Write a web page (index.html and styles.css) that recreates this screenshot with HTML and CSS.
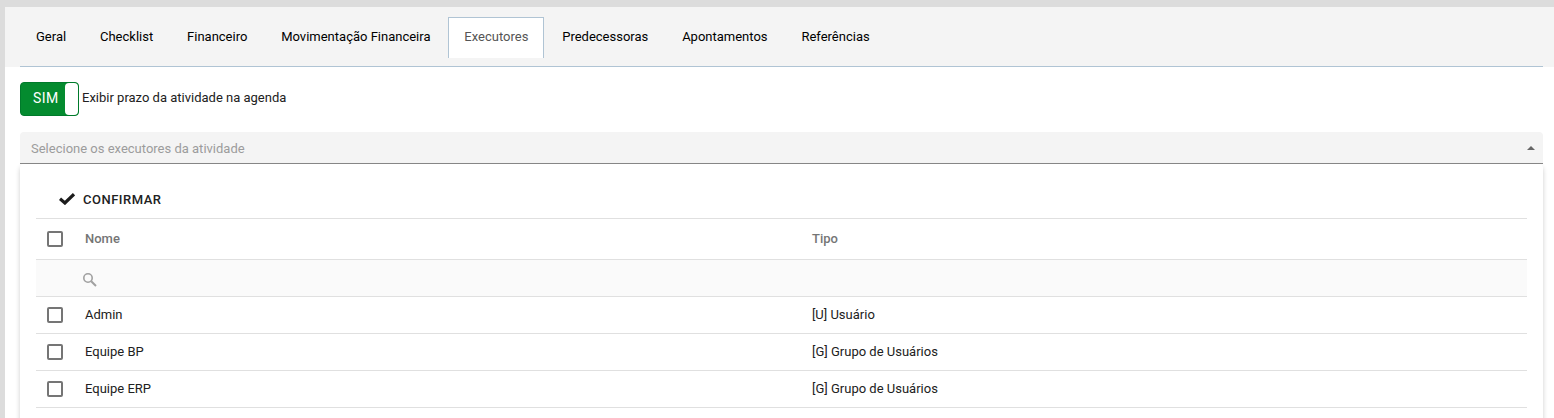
FILE: index.html
```html
<!DOCTYPE html>
<html lang="pt-BR">
<head>
<meta charset="utf-8">
<title>Executores</title>
<link rel="stylesheet" href="styles.css">
</head>
<body>
<main class="page">
  <header class="tabs-bar">
    <nav class="tabs">
      <a class="tab">Geral</a>
      <a class="tab">Checklist</a>
      <a class="tab">Financeiro</a>
      <a class="tab">Movimentação Financeira</a>
      <a class="tab tab-active">Executores</a>
      <a class="tab">Predecessoras</a>
      <a class="tab">Apontamentos</a>
      <a class="tab">Referências</a>
    </nav>
  </header>
  <section class="content">
    <div class="switch-row">
      <div class="switch"><span class="switch-text">SIM</span><span class="switch-handle"></span></div>
      <span class="switch-label">Exibir prazo da atividade na agenda</span>
    </div>
    <div class="select">
      <span>Selecione os executores da atividade</span>
      <svg class="arrow" width="8" height="4" viewBox="0 0 8 4"><path d="M0 4 4 0 8 4z" fill="#666"/></svg>
    </div>
    <div class="panel">
      <div class="toolbar">
        <svg width="16" height="12" viewBox="0 0 16 12"><path d="M1 5.8 5.9 10 15 1.2" fill="none" stroke="#1c1c1c" stroke-width="3.2"/></svg>
        <span>CONFIRMAR</span>
      </div>
      <div class="grid">
        <div class="row row-head"><span class="cell-check"><i class="check"></i></span><span class="cell">Nome</span><span class="cell">Tipo</span></div>
        <div class="row row-filter">
          <svg class="search" width="14" height="14" viewBox="0 0 14 14" fill="none" stroke="#a0a0a0"><circle cx="5" cy="5" r="4.2" stroke-width="1.6"/><path d="M8.2 8.2 13 13" stroke-width="2"/></svg>
        </div>
        <div class="row"><span class="cell-check"><i class="check"></i></span><span class="cell">Admin</span><span class="cell">[U] Usuário</span></div>
        <div class="row"><span class="cell-check"><i class="check"></i></span><span class="cell">Equipe BP</span><span class="cell">[G] Grupo de Usuários</span></div>
        <div class="row"><span class="cell-check"><i class="check"></i></span><span class="cell">Equipe ERP</span><span class="cell">[G] Grupo de Usuários</span></div>
      </div>
    </div>
  </section>
</main>
</body>
</html>
```

FILE: styles.css
```css
* { box-sizing: border-box; }
body {
  margin: 0;
  height: 418px;
  overflow: hidden;
  padding: 7px 0 0 5px;
  background: #dcdcdc;
  font: 13px/20px Roboto, sans-serif;
  color: #212121;
}
.page { height: 411px; background: #fff; overflow: hidden; }
.tabs-bar { height: 60px; padding: 10px 11px 0 15px; background: #f4f4f4; }
.tabs { display: flex; gap: 1.85px; height: 50px; border-bottom: 1px solid #b0c4d4; }
.tab {
  height: 41px;
  padding: 9px 15px 0;
  border: 1px solid transparent;
  border-bottom: 0;
  color: #000;
  white-space: nowrap;
}
.tab-active { background: #fff; border-color: #b0c4d4; color: #555; }
.content { padding: 15px 11px 0 15px; }
.switch-row { display: flex; gap: 3px; height: 34px; }
.switch {
  display: flex;
  width: 59px;
  height: 34px;
  border: 1px solid #007a2b;
  border-radius: 4px;
  background: #048b2f;
  color: #fff;
}
.switch-text { width: 44px; padding-left: 12px; font-size: 14px; line-height: 31px; letter-spacing: .5px; }
.switch-handle { width: 13px; background: #fff; border-radius: 4px; }
.switch-label { line-height: 32px; }
.select {
  display: flex;
  justify-content: space-between;
  height: 32px;
  margin-top: 16px;
  padding: 0 8px 0 11px;
  border-bottom: 1px solid #898989;
  border-radius: 4px 4px 0 0;
  background: #f4f4f4;
  color: #9c9c9c;
  line-height: 33px;
}
.arrow { margin-top: 14px; }
.panel {
  height: 300px;
  padding: 16px 16px 0;
  border-radius: 4px;
  box-shadow: 0 3px 5px rgba(0, 0, 0, .2);
  background: #fff;
}
.toolbar {
  display: flex;
  align-items: center;
  gap: 8px;
  height: 38px;
  padding: 1px 0 0 23px;
  font-weight: 500;
  letter-spacing: .5px;
}
.toolbar svg { margin-bottom: 1px; }
.toolbar span { padding-top: 1px; }
.grid { border-top: 1px solid #e0e0e0; }
.row {
  display: grid;
  grid-template-columns: 49px 727px 1fr;
  height: 37px;
  align-items: center;
  border-bottom: 1px solid #e0e0e0;
}
.row-head { height: 41px; color: #757575; font-weight: 500; }
.row-filter { background: #fafafa; }
.cell-check { display: flex; padding-left: 11px; }
.check { width: 16px; height: 16px; border: 2px solid #757575; border-radius: 2px; }
.search { grid-column: 1 / -1; margin: 3px 0 0 47px; }
```
